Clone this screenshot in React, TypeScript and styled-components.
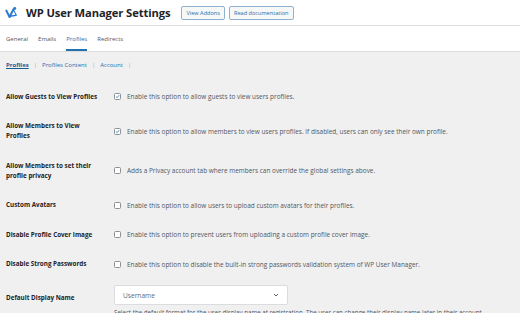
import React from "react";
import styled, { createGlobalStyle } from "styled-components";

const Global = createGlobalStyle`
  html, body { margin: 0; padding: 0; background: #f0f0f1; }
  body { font-family: "Open Sans", "Noto Sans", sans-serif; color: #1d2327; overflow: hidden; }
`;

const Page = styled.div`
  width: 520px;
  height: 313px;
  overflow: hidden;
  background: #f0f0f1;
`;

const Header = styled.header`
  display: flex;
  align-items: center;
  height: 26px;
  padding-left: 5px;
  background: #fff;
  border-bottom: 1px solid #dcdcde;
  box-sizing: border-box;
`;

const Title = styled.h1`
  margin: 0 11px 0 8px;
  font-size: 11.2px;
  font-weight: 700;
  color: #1d2327;
  letter-spacing: -0.1px;
`;

const HeadButton = styled.span`
  display: inline-flex;
  align-items: center;
  height: 14px;
  padding: 0 4px;
  margin-right: 4px;
  border: 1px solid #8fb1d3;
  border-radius: 2px;
  box-sizing: border-box;
  font-size: 5.6px;
  color: #2271b1;
  background: #f6f7f7;
`;

const Tabs = styled.nav`
  display: flex;
  height: 26px;
  padding-left: 6px;
  gap: 10px;
  background: #fff;
  border-bottom: 1px solid #dcdcde;
  box-sizing: border-box;
`;

const Tab = styled.span<{ $active?: boolean }>`
  display: flex;
  align-items: center;
  font-size: 6px;
  color: ${(p) => (p.$active ? "#2271b1" : "#50575e")};
  border-bottom: 2px solid ${(p) => (p.$active ? "#2271b1" : "transparent")};
  padding-top: 3px;
`;

const SubNav = styled.div`
  display: flex;
  align-items: center;
  gap: 5px;
  height: 26px;
  padding: 0 6px;
  font-size: 6px;
  color: #2271b1;
`;

const SubLink = styled.span<{ $current?: boolean }>`
  font-weight: ${(p) => (p.$current ? 700 : 400)};
  text-decoration: ${(p) => (p.$current ? "underline" : "none")};
  color: ${(p) => (p.$current ? "#135e96" : "#2271b1")};
`;

const Sep = styled.span`
  color: #a7aaad;
`;

const FormTable = styled.div`
  display: grid;
  grid-template-columns: 108px 406px;
  padding-left: 6px;
  margin-top: 4px;
`;

const Label = styled.div`
  display: flex;
  align-items: center;
  padding: 9.75px 0;
  font-size: 6.3px;
  line-height: 10px;
  font-weight: 700;
  color: #1d2327;
  width: 92px;
`;

const Field = styled.div`
  display: flex;
  align-items: center;
  gap: 6px;
  font-size: 6.45px;
  color: #50575e;
  white-space: nowrap;
`;

const Box = styled.span`
  flex: none;
  width: 7px;
  height: 7px;
  border: 1px solid #8c8f94;
  border-radius: 1.5px;
  background: #fff;
  display: flex;
  align-items: center;
  justify-content: center;
  box-sizing: border-box;
`;

const SelectCol = styled.div`
  display: flex;
  flex-direction: column;
  align-items: flex-start;
  gap: 3px;
  padding-top: 6px;
  min-width: 0;
`;

const Select = styled.div`
  width: 174px;
  height: 20px;
  box-sizing: border-box;
  border: 1px solid #dcdcde;
  border-radius: 2px;
  background: #fff;
  display: flex;
  align-items: center;
  justify-content: space-between;
  padding: 0 8px;
  font-size: 6.6px;
  color: #646970;
`;

const Help = styled.div`
  font-size: 6.2px;
  color: #50575e;
  white-space: nowrap;
`;

const Check = () => (
  <svg width="7" height="7" viewBox="0 0 10 10">
    <path d="M2 5.2 L4.2 7.3 L8.3 2.4" fill="none" stroke="#2271b1" strokeWidth="1.6" />
  </svg>
);

const Logo = () => (
  <svg width="13" height="13" viewBox="0 0 20 20">
    <path d="M2 7 L7 17 L13 5" fill="none" stroke="#2b7bd3" strokeWidth="3" strokeLinejoin="round" strokeLinecap="round" />
    <path d="M7 17 C10 14 13 16 17 14" fill="none" stroke="#2b7bd3" strokeWidth="2.4" strokeLinecap="round" />
    <circle cx="15" cy="4" r="2.3" fill="#2b7bd3" />
    <path d="M13 5 C14 9 16 11 17 14" fill="none" stroke="#2b7bd3" strokeWidth="1.6" strokeLinecap="round" />
  </svg>
);

const Chevron = () => (
  <svg width="6" height="4" viewBox="0 0 6 4">
    <path d="M1 1 L3 3 L5 1" fill="none" stroke="#50575e" strokeWidth="0.9" />
  </svg>
);

type Row = { label: string; text: string; checked?: boolean };

const rows: Row[] = [
  { label: "Allow Guests to View Profiles", text: "Enable this option to allow guests to view users profiles.", checked: true },
  { label: "Allow Members to View Profiles", text: "Enable this option to allow members to view users profiles. If disabled, users can only see their own profile.", checked: true },
  { label: "Allow Members to set their profile privacy", text: "Adds a Privacy account tab where members can override the global settings above." },
  { label: "Custom Avatars", text: "Enable this option to allow users to upload custom avatars for their profiles." },
  { label: "Disable Profile Cover Image", text: "Enable this option to prevent users from uploading a custom profile cover image." },
  { label: "Disable Strong Passwords", text: "Enable this option to disable the built-in strong passwords validation system of WP User Manager." },
];

export default function App() {
  return (
    <Page>
      <Global />
      <Header>
        <Logo />
        <Title>WP User Manager Settings</Title>
        <HeadButton>View Addons</HeadButton>
        <HeadButton>Read documentation</HeadButton>
      </Header>
      <Tabs>
        <Tab>General</Tab>
        <Tab>Emails</Tab>
        <Tab $active>Profiles</Tab>
        <Tab>Redirects</Tab>
      </Tabs>
      <SubNav>
        <SubLink $current>Profiles</SubLink>
        <Sep>|</Sep>
        <SubLink>Profiles Content</SubLink>
        <Sep>|</Sep>
        <SubLink>Account</SubLink>
        <Sep>|</Sep>
      </SubNav>
      <FormTable>
        {rows.map((r) => (
          <React.Fragment key={r.label}>
            <Label>{r.label}</Label>
            <Field>
              <Box>{r.checked && <Check />}</Box>
              {r.text}
            </Field>
          </React.Fragment>
        ))}
        <Label>Default Display Name</Label>
        <SelectCol>
          <Select>
            Username
            <Chevron />
          </Select>
          <Help>Select the default format for the user display name at registration. The user can change their display name later in their account.</Help>
        </SelectCol>
      </FormTable>
    </Page>
  );
}
